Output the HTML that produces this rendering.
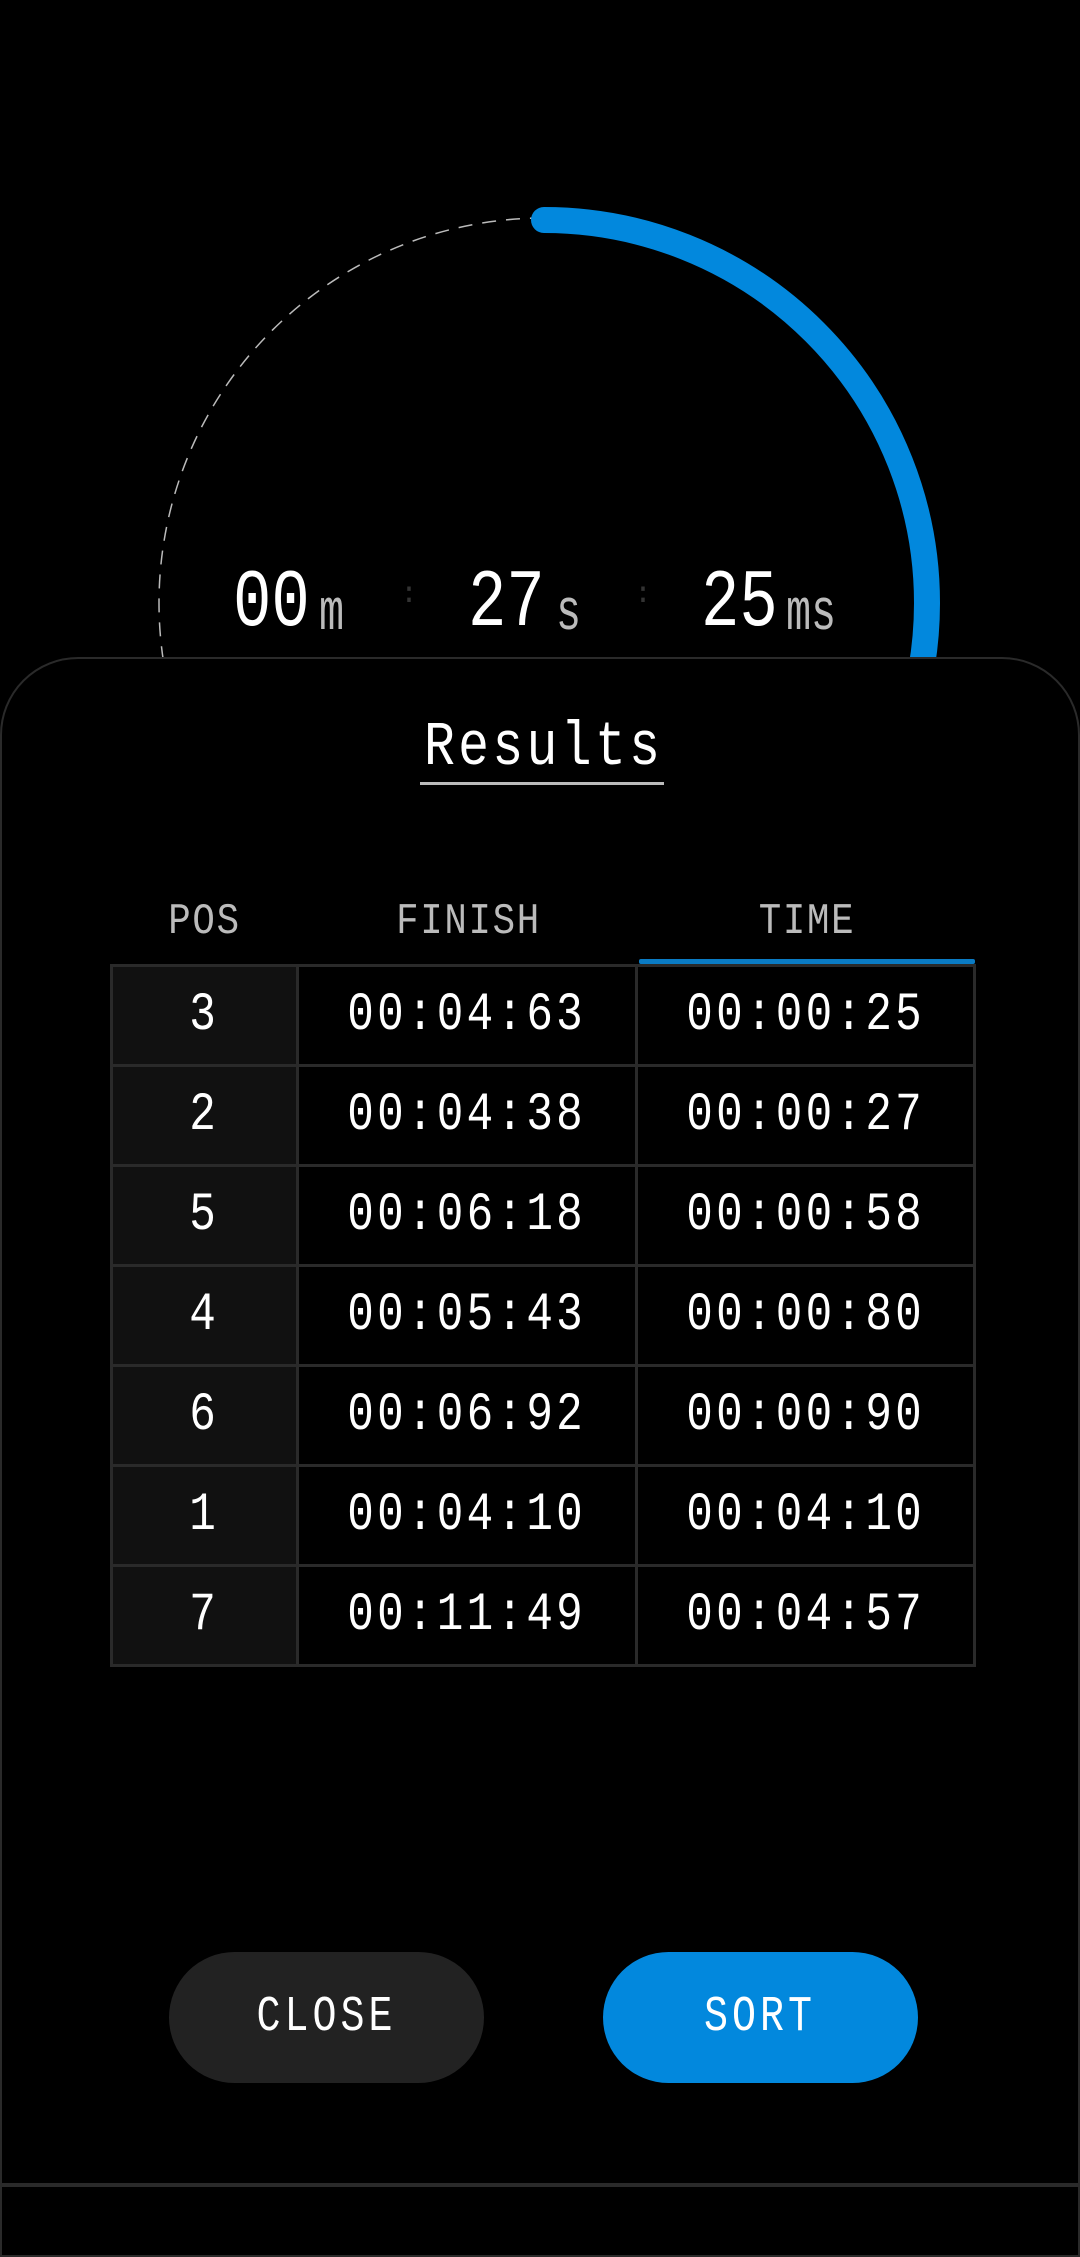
<!DOCTYPE html>
<html><head><meta charset="utf-8"><style>
html,body{margin:0;padding:0;background:#000;}
body{width:1080px;height:2187px;position:relative;overflow:hidden;font-family:"Liberation Mono","DejaVu Sans Mono",monospace;color:#fff;}
.t{position:absolute;white-space:nowrap;line-height:1;}
.big{font-size:82px;transform:scaleX(0.78);transform-origin:left top;top:563px;}
.unit{font-size:58px;color:#bbb;transform:scaleX(0.72);transform-origin:left top;top:586px;}
.col{font-size:30px;color:#333;top:580px;}
.panel{position:absolute;left:0;right:0;top:657px;height:1600px;background:#000;border:2px solid #2a2a2a;border-radius:78px 78px 0 0;box-sizing:border-box;}
.title{position:absolute;left:342px;width:400px;top:717px;text-align:center;font-size:62px;letter-spacing:4px;text-indent:4px;transform:scaleX(0.83);}
.uline{position:absolute;left:420px;width:244px;top:782px;height:3px;background:#bbb;}
.hdr{position:absolute;top:900px;font-size:44px;color:#bbb;text-align:center;letter-spacing:2px;transform:scaleX(0.85);}
table{position:absolute;left:110px;top:964px;width:866px;border-collapse:collapse;}
td{height:97px;border:3px solid #2a2a2a;text-align:center;font-size:54px;letter-spacing:4px;padding:0;}
td.p{background:#111;width:183px;}
td span{display:inline-block;transform:scaleX(0.82);}
.btn{position:absolute;top:1952px;height:131px;width:315px;border-radius:66px;text-align:center;line-height:131px;font-size:50px;letter-spacing:5px;}
.btn span{display:inline-block;transform:scaleX(0.8);}
</style></head><body>
<svg width="1080" height="700" style="position:absolute;left:0;top:0">
<circle cx="544" cy="603" r="385" fill="none" stroke="#bbb" stroke-width="1.5" stroke-dasharray="14 10"/>
<path d="M544 220 A383 383 0 0 1 544 986" fill="none" stroke="#0288dd" stroke-width="26" stroke-linecap="round"/>
</svg>
<div class="t big" style="left:233px">00</div>
<div class="t unit" style="left:319px">m</div>
<div class="t col" style="left:400px">:</div>
<div class="t big" style="left:468px">27</div>
<div class="t unit" style="left:556px">s</div>
<div class="t col" style="left:634px">:</div>
<div class="t big" style="left:701px">25</div>
<div class="t unit" style="left:786px">ms</div>
<div class="panel"></div>
<div class="t title">Results</div>
<div class="uline"></div>
<div class="t hdr" style="left:110px;width:189px">POS</div>
<div class="t hdr" style="left:299px;width:339px">FINISH</div>
<div class="t hdr" style="left:638px;width:338px">TIME</div>
<div style="position:absolute;left:639px;top:959px;width:336px;height:5px;background:#0a7bc4;border-radius:2px"></div>
<table>
<tr><td class="p"><span>3</span></td><td><span>00:04:63</span></td><td><span>00:00:25</span></td></tr>
<tr><td class="p"><span>2</span></td><td><span>00:04:38</span></td><td><span>00:00:27</span></td></tr>
<tr><td class="p"><span>5</span></td><td><span>00:06:18</span></td><td><span>00:00:58</span></td></tr>
<tr><td class="p"><span>4</span></td><td><span>00:05:43</span></td><td><span>00:00:80</span></td></tr>
<tr><td class="p"><span>6</span></td><td><span>00:06:92</span></td><td><span>00:00:90</span></td></tr>
<tr><td class="p"><span>1</span></td><td><span>00:04:10</span></td><td><span>00:04:10</span></td></tr>
<tr><td class="p"><span>7</span></td><td><span>00:11:49</span></td><td><span>00:04:57</span></td></tr>
</table>
<div class="btn" style="left:169px;background:#222"><span>CLOSE</span></div>
<div class="btn" style="left:603px;background:#0288dd"><span>SORT</span></div>
<div style="position:absolute;left:0;right:0;top:2183px;height:4px;background:#2a2a2a"></div>
</body></html>
